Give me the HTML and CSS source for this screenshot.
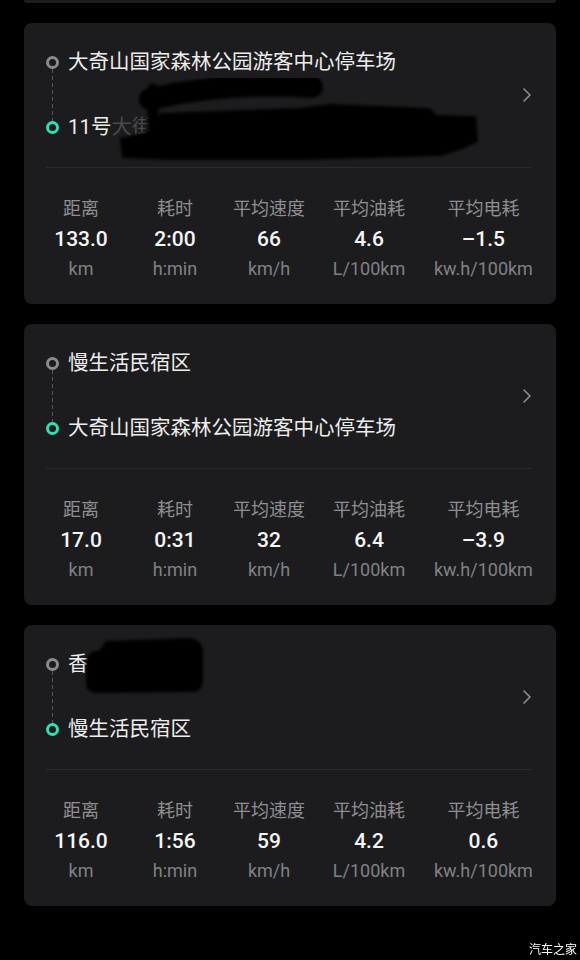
FILE: index.html
```html
<!DOCTYPE html>
<html lang="zh-CN">
  <head>
    <meta charset="UTF-8" />
    <meta name="viewport" content="width=device-width, initial-scale=1.0" />
    <title>行程记录</title>
    <link rel="stylesheet" href="styles.css">
  </head>
  <body>
    <div class="trip-list">
      <div class="card card-cut"></div>

      <div class="card">
        <div class="route">
          <div class="route-points">
            <span class="dot dot-start"></span>
            <span class="place place-start">大奇山国家森林公园游客中心停车场</span>
            <span class="route-line"></span>
            <span class="dot dot-end"></span>
            <span class="place place-end">11号<span class="ghost">大街2</span></span>
          </div>
          <svg class="chevron" width="10" height="16" viewBox="0 0 10 16">
            <polyline points="2,2 8,8 2,14" />
          </svg>
          <!-- 涂抹遮挡 -->
          <svg class="smudge smudge-1" width="372" height="92" viewBox="0 0 372 92">
            <defs>
              <filter id="soft1"><feGaussianBlur stdDeviation="1.4" /></filter>
            </defs>
            <g filter="url(#soft1)">
              <path d="M36 24 Q116 6 198 12" stroke="#060606" stroke-width="22" stroke-linecap="round" fill="none" />
              <path d="M39 14 L39 54" stroke="#060606" stroke-width="11" stroke-linecap="round" />
              <path d="M46 38 L186 33 L216 29 L316 33 L322 40 L362 41 L364 67 L346 75 L326 81 L186 85 L56 85 L8 83 L6 63 L41 55 Z" fill="#060606" />
            </g>
          </svg>
        </div>
        <div class="divider"></div>
        <div class="stats">
          <div class="stat"><span class="stat-label">距离</span><span class="stat-value">133.0</span><span class="stat-unit">km</span></div>
          <div class="stat"><span class="stat-label">耗时</span><span class="stat-value">2:00</span><span class="stat-unit">h:min</span></div>
          <div class="stat"><span class="stat-label">平均速度</span><span class="stat-value">66</span><span class="stat-unit">km/h</span></div>
          <div class="stat"><span class="stat-label">平均油耗</span><span class="stat-value">4.6</span><span class="stat-unit">L/100km</span></div>
          <div class="stat"><span class="stat-label">平均电耗</span><span class="stat-value">–1.5</span><span class="stat-unit">kw.h/100km</span></div>
        </div>
      </div>

      <div class="card">
        <div class="route">
          <div class="route-points">
            <span class="dot dot-start"></span>
            <span class="place place-start">慢生活民宿区</span>
            <span class="route-line"></span>
            <span class="dot dot-end"></span>
            <span class="place place-end">大奇山国家森林公园游客中心停车场</span>
          </div>
          <svg class="chevron" width="10" height="16" viewBox="0 0 10 16">
            <polyline points="2,2 8,8 2,14" />
          </svg>
        </div>
        <div class="divider"></div>
        <div class="stats">
          <div class="stat"><span class="stat-label">距离</span><span class="stat-value">17.0</span><span class="stat-unit">km</span></div>
          <div class="stat"><span class="stat-label">耗时</span><span class="stat-value">0:31</span><span class="stat-unit">h:min</span></div>
          <div class="stat"><span class="stat-label">平均速度</span><span class="stat-value">32</span><span class="stat-unit">km/h</span></div>
          <div class="stat"><span class="stat-label">平均油耗</span><span class="stat-value">6.4</span><span class="stat-unit">L/100km</span></div>
          <div class="stat"><span class="stat-label">平均电耗</span><span class="stat-value">–3.9</span><span class="stat-unit">kw.h/100km</span></div>
        </div>
      </div>

      <div class="card">
        <div class="route">
          <div class="route-points">
            <span class="dot dot-start"></span>
            <span class="place place-start">香</span>
            <span class="route-line"></span>
            <span class="dot dot-end"></span>
            <span class="place place-end">慢生活民宿区</span>
          </div>
          <svg class="chevron" width="10" height="16" viewBox="0 0 10 16">
            <polyline points="2,2 8,8 2,14" />
          </svg>
          <svg class="smudge smudge-3" width="124" height="60" viewBox="0 0 124 60">
            <defs>
              <filter id="soft3"><feGaussianBlur stdDeviation="1.4" /></filter>
            </defs>
            <path filter="url(#soft3)" d="M22 5 L106 2 Q118 4 119 14 L119 44 Q118 55 111 56 L11 57 Q3 56 2 49 L2 24 Q4 15 16 14 Z" fill="#050505" />
          </svg>
        </div>
        <div class="divider"></div>
        <div class="stats">
          <div class="stat"><span class="stat-label">距离</span><span class="stat-value">116.0</span><span class="stat-unit">km</span></div>
          <div class="stat"><span class="stat-label">耗时</span><span class="stat-value">1:56</span><span class="stat-unit">h:min</span></div>
          <div class="stat"><span class="stat-label">平均速度</span><span class="stat-value">59</span><span class="stat-unit">km/h</span></div>
          <div class="stat"><span class="stat-label">平均油耗</span><span class="stat-value">4.2</span><span class="stat-unit">L/100km</span></div>
          <div class="stat"><span class="stat-label">平均电耗</span><span class="stat-value">0.6</span><span class="stat-unit">kw.h/100km</span></div>
        </div>
      </div>
    </div>

    <div class="watermark">汽车之家</div>
  </body>
</html>
```

FILE: styles.css
```css
body {
  margin: 0;
  padding: 0;
  background-color: #000;
  color: #f0f0f0;
  font-family: Roboto, "Noto Sans CJK SC", sans-serif;
  overflow: hidden;
}
.trip-list {
  display: flex;
  flex-direction: column;
  gap: 20px;
  padding: 0 24px;
}
.card {
  position: relative;
  background-color: #1c1c1e;
  border-radius: 8px;
  padding: 25px 24px 23px 22px;
}
.card-cut {
  height: 3px;
  padding: 0;
  border-radius: 0 0 8px 8px;
}
.route {
  position: relative;
  display: flex;
  align-items: center;
}
.route-points {
  flex: 1;
  display: grid;
  grid-template-columns: 13px 1fr;
  grid-template-rows: 28px 37px 28px;
  column-gap: 9px;
  align-items: center;
}
.dot {
  grid-column: 1;
  width: 13px;
  height: 13px;
  box-sizing: border-box;
  border: 3.5px solid #8b8b8d;
  border-radius: 50%;
}
.dot-start,
.place-start {
  grid-row: 1;
}
.dot-end,
.place-end {
  grid-row: 3;
}
.dot-end {
  border-color: #30dfb5;
}
.route-line {
  grid-column: 1;
  grid-row: 2;
  align-self: stretch;
  justify-self: center;
  width: 1.5px;
  margin: -7px 0 -8px;
  background: repeating-linear-gradient(to bottom, #55555a 0 4px, transparent 4px 7px);
}
.place {
  grid-column: 2;
  font-size: 20.5px;
  line-height: 28px;
  color: #ededed;
  white-space: nowrap;
}
.ghost {
  color: #4a4a4c;
}
.chevron {
  flex: none;
  fill: none;
  stroke: #8e8e90;
  stroke-width: 1.6;
  stroke-linecap: round;
  stroke-linejoin: round;
}
.smudge {
  position: absolute;
  pointer-events: none;
}
.smudge-1 {
  left: 68px;
  top: 27px;
}
.smudge-3 {
  left: 38px;
  top: -14px;
}
.divider {
  height: 1px;
  margin-top: 26px;
  background-color: #2b2b2d;
}
.stats {
  display: grid;
  grid-template-columns: 70px 118px 70px 130px 1fr;
  margin-top: 29px;
}
.stat {
  display: flex;
  flex-direction: column;
  align-items: center;
  gap: 4px;
  white-space: nowrap;
}
.stat-label {
  font-size: 18px;
  line-height: 24px;
  color: #8f8f92;
}
.stat-value {
  font-size: 21px;
  line-height: 28px;
  font-weight: 500;
  color: #f5f5f5;
}
.stat-unit {
  font-size: 18px;
  line-height: 24px;
  color: #818184;
}
.watermark {
  position: fixed;
  right: 3px;
  bottom: 3px;
  font-family: "Noto Sans CJK SC", sans-serif;
  font-size: 12px;
  line-height: 16px;
  color: #fff;
  text-shadow: 0 0 2px #000, 0 0 1px #000;
}
```
